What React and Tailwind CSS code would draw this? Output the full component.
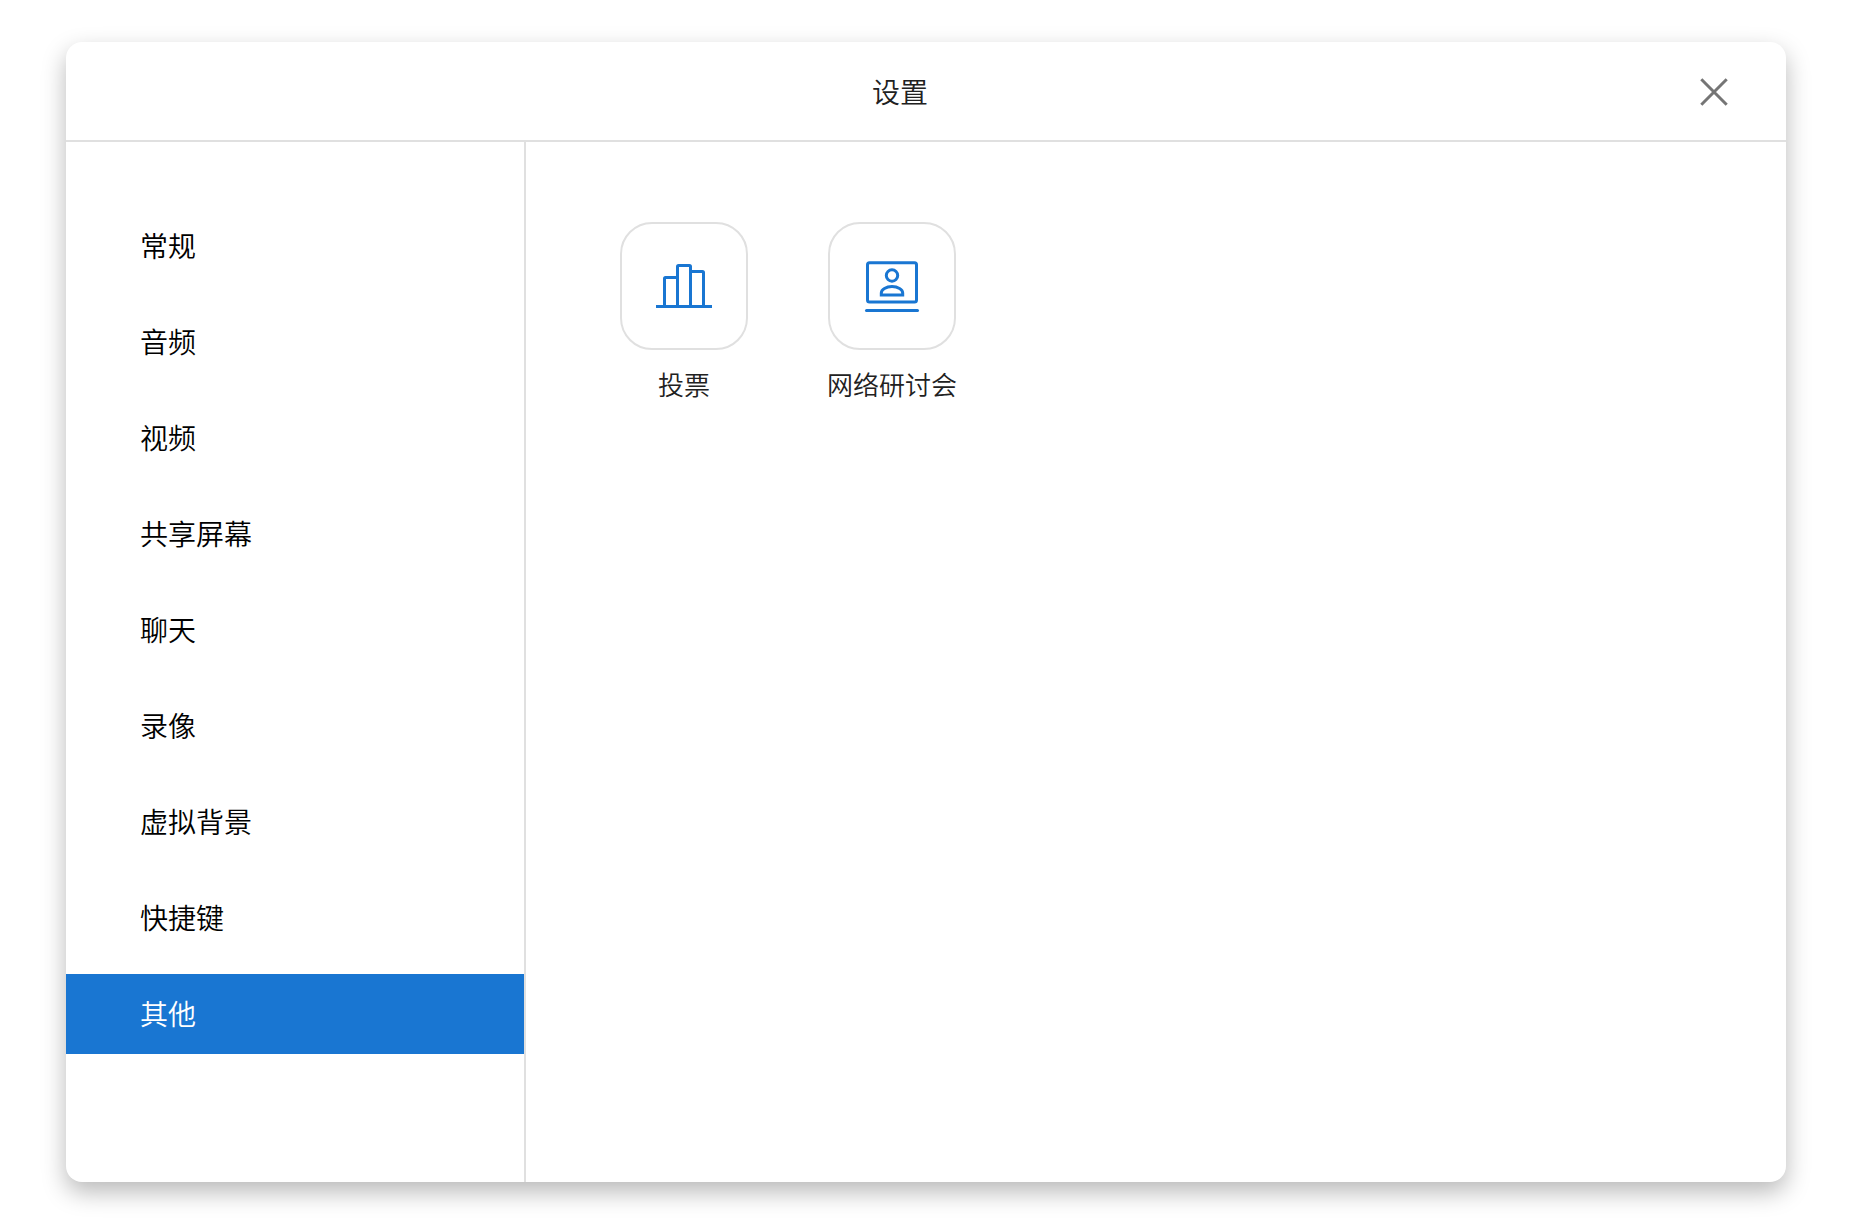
import React, { useState } from "react";
import clsx from "clsx";

const SECTIONS = [
  { id: "general", label: "常规" },
  { id: "audio", label: "音频" },
  { id: "video", label: "视频" },
  { id: "share", label: "共享屏幕" },
  { id: "chat", label: "聊天" },
  { id: "recording", label: "录像" },
  { id: "background", label: "虚拟背景" },
  { id: "shortcuts", label: "快捷键" },
  { id: "other", label: "其他" },
];

function CloseIcon({ className }) {
  return (
    <svg
      viewBox="0 0 28 28"
      fill="none"
      stroke="currentColor"
      strokeWidth="3"
      className={className}
      aria-hidden="true"
    >
      <path d="M1.3 2.3l25.4 25.4M26.7 2.3L1.3 27.7" />
    </svg>
  );
}

function PollIcon({ className }) {
  return (
    <svg
      viewBox="0 0 56 56"
      fill="none"
      stroke="currentColor"
      strokeWidth="3"
      className={className}
      aria-hidden="true"
    >
      <path d="M0 48.5h56" />
      <path d="M8.5 48V20.5a1 1 0 0 1 1-1h12" />
      <path d="M21.5 48V8.5a1 1 0 0 1 1-1h11a1 1 0 0 1 1 1V48" />
      <path d="M34.5 13.5h12a1 1 0 0 1 1 1V48" />
    </svg>
  );
}

function WebinarIcon({ className }) {
  return (
    <svg
      viewBox="0 0 56 56"
      fill="none"
      stroke="currentColor"
      strokeWidth="3"
      className={className}
      aria-hidden="true"
    >
      <rect x="3.5" y="4.8" width="49" height="39.2" rx="2" />
      <circle cx="28" cy="17.5" r="5.7" />
      <path d="M17.3 37.1V35c0-3.6 4.8-6.4 10.7-6.4S38.7 31.4 38.7 35v2.1z" />
      <path d="M2.5 52.5h51" strokeLinecap="round" />
    </svg>
  );
}

const APPS = [
  { id: "poll", label: "投票", Icon: PollIcon },
  { id: "webinar", label: "网络研讨会", Icon: WebinarIcon },
];

function Sidebar({ active, onSelect }) {
  return (
    <nav className="w-[460px] shrink-0 border-r-2 border-[#e0e0e0] py-16">
      <ul className="flex flex-col gap-4">
        {SECTIONS.map(({ id, label }) => (
          <li key={id}>
            <button
              type="button"
              onClick={() => onSelect(id)}
              aria-current={active === id ? "page" : undefined}
              className={clsx(
                "flex h-20 w-full items-center pb-0.5 pl-[74px] text-left",
                active === id ? "bg-[#1976d2] text-white" : "text-black"
              )}
            >
              {label}
            </button>
          </li>
        ))}
      </ul>
    </nav>
  );
}

function AppTile({ label, Icon }) {
  return (
    <button type="button" className="flex w-32 flex-col items-center gap-4">
      <span className="flex size-32 items-center justify-center rounded-[32px] border-2 border-[#e0e0e0] text-[#1976d2]">
        <Icon className="size-14" />
      </span>
      <span className="text-[26px] leading-9 whitespace-nowrap">{label}</span>
    </button>
  );
}

export default function App() {
  const [active, setActive] = useState("other");

  return (
    <div className="flex min-h-screen bg-white px-[66px] py-[42px] font-['Noto_Sans_CJK_SC',sans-serif] text-[28px] leading-10 font-[350] text-[#212121]">
      <div
        role="dialog"
        aria-labelledby="settings-title"
        className="flex flex-1 flex-col overflow-hidden rounded-2xl bg-white shadow-[0_10px_24px_rgba(0,0,0,0.28)]"
      >
        <header className="flex h-[100px] shrink-0 items-center border-b-2 border-[#e0e0e0] pr-[58px] pl-[34px]">
          <h1 id="settings-title" className="flex-1 text-center">
            设置
          </h1>
          <button type="button" aria-label="关闭" className="text-[#757575]">
            <CloseIcon className="size-7 overflow-visible" />
          </button>
        </header>

        <div className="flex flex-1">
          <Sidebar active={active} onSelect={setActive} />
          <main className="flex flex-1 flex-wrap content-start gap-20 px-[94px] py-20">
            {APPS.map((app) => (
              <AppTile key={app.id} {...app} />
            ))}
          </main>
        </div>
      </div>
    </div>
  );
}
